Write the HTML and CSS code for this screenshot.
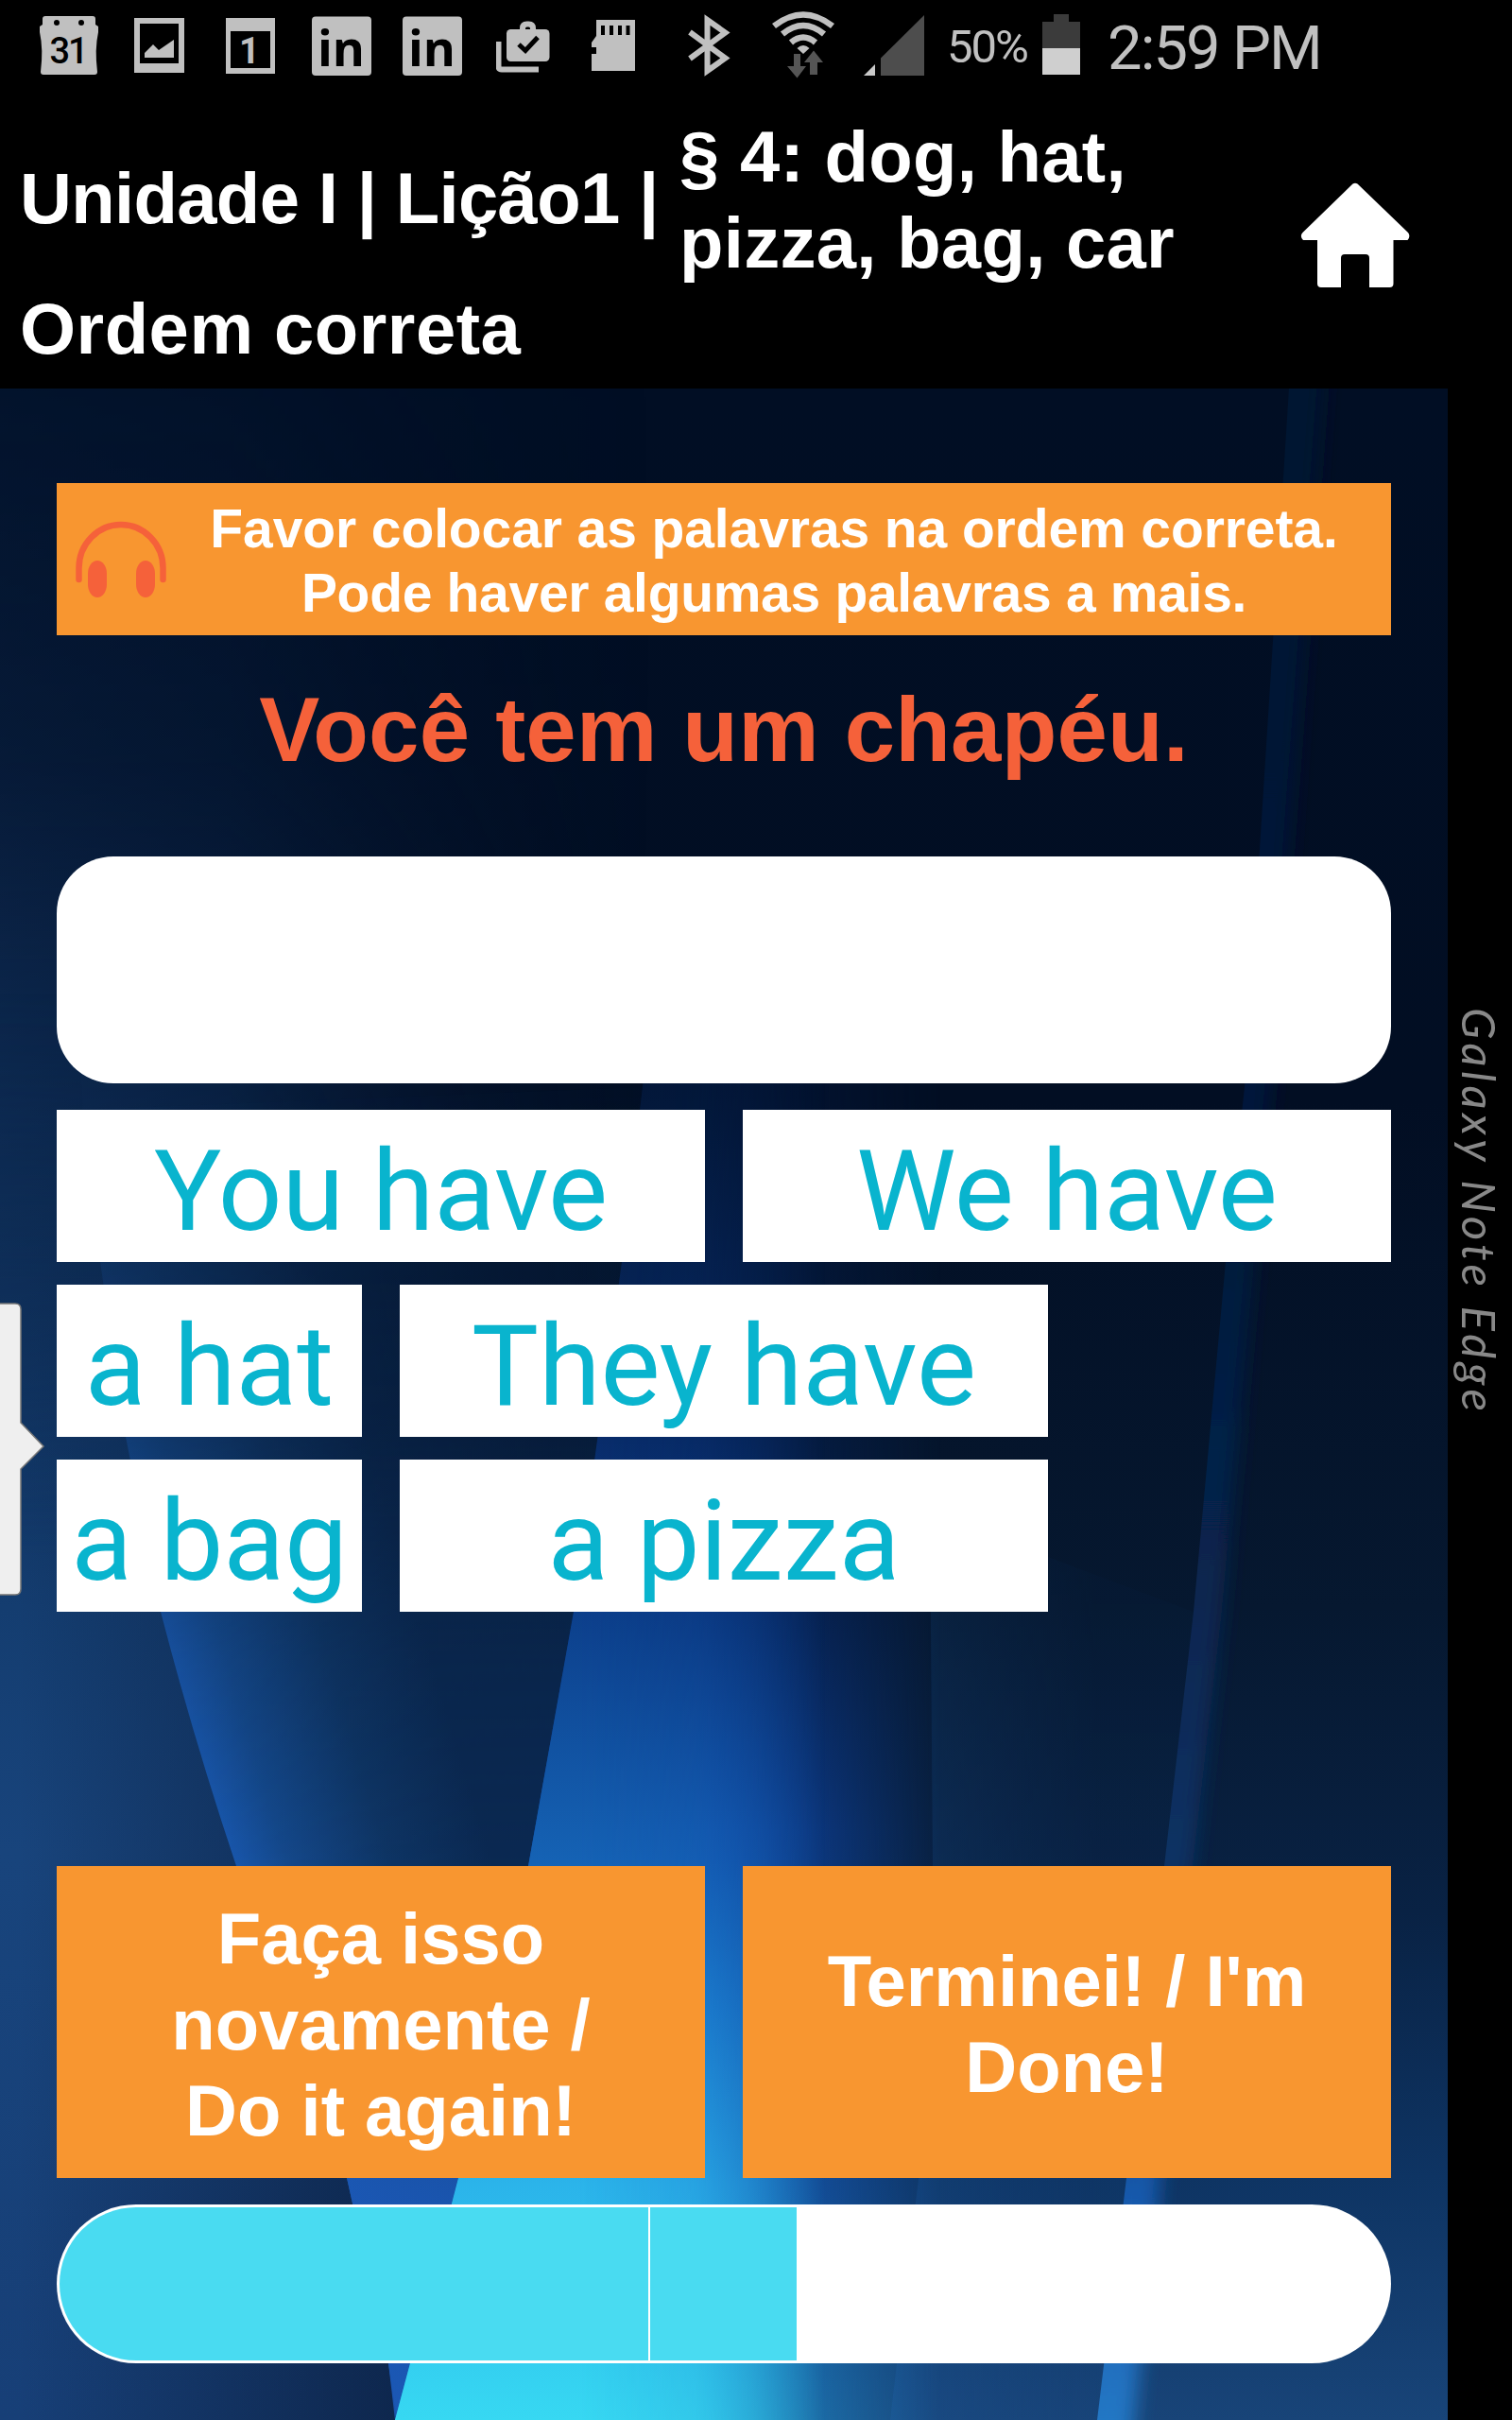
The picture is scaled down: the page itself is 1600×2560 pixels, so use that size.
FILE: index.html
```html
<!DOCTYPE html>
<html lang="pt">
<head>
<meta charset="utf-8">
<title>Ordem correta</title>
<link rel="stylesheet" href="styles.css">
</head>
<body>
<div class="device">
  <div class="screen">
    <header class="top">
      <div class="status">
        <svg viewBox="42 0 64 100" width="64" height="100"><path fill="#c0c0c0" d="M48 17h50q3 0 3 3v6l3 2v6q-4 18-1 42 0 3-3 3H46q-3 0-3-3 3-24-1-42v-6l3-2v-6q0-3 3-3z"/><circle cx="60" cy="24" r="3" /><circle cx="86" cy="24" r="3"/><text x="72" y="67" class="cal31">31</text></svg>
        <svg viewBox="142 0 54 100" width="54" height="100"><path fill="#c0c0c0" fill-rule="evenodd" d="M142 19h53v58h-53zM148 25v42h41V25z"/><path fill="#c0c0c0" d="M153 61v-5l9-9 6 6 16-11v19z"/></svg>
        <svg viewBox="239 0 53 100" width="53" height="100"><path fill="#c0c0c0" fill-rule="evenodd" d="M239 19h52v59h-52zM244 33v39h42V33z"/><text x="264" y="67" class="cal1">1</text></svg>
        <svg viewBox="330 0 64 100" width="64" height="100"><rect x="330" y="17.500" width="63" height="62.500" rx="4" fill="#c0c0c0"/><text x="361" y="70" class="lin">in</text></svg>
        <svg viewBox="330 0 64 100" width="64" height="100"><rect x="330" y="17.500" width="63" height="62.500" rx="4" fill="#c0c0c0"/><text x="361" y="70" class="lin">in</text></svg>
        <svg viewBox="525 0 58 100" width="58" height="100"><path fill="none" stroke="#c0c0c0" stroke-width="6" d="M527.500 44v26q0 3.500 3.500 3.500h39"/><path fill="none" stroke="#c0c0c0" stroke-width="6" d="M553 33v-3q0-4.500 4.500-4.500h2q4.500 0 4.500 4.500v3"/><rect x="536" y="31" width="45.500" height="34" rx="4.500" fill="#c0c0c0"/><path fill="none" stroke="#000" stroke-width="5" d="M549 47l7 6.500 13-14"/></svg>
        <svg viewBox="626 0 47 100" width="47" height="100"><path fill="#c0c0c0" d="M631 21h41v54h-46V57h5v-7h-5v-5l5-7z"/><path d="M636 27h4v10h-4zM645 27h4v10h-4zM654 27h4v10h-4zM662.500 27h4v10h-4z"/></svg>
        <svg viewBox="728 0 46 100" width="46" height="100"><path fill="none" stroke="#c0c0c0" stroke-width="6" d="M730 34l37.500 27.500-19 13.500V21l19 13.500L730 62"/></svg>
        <svg viewBox="816 0 70 100" width="70" height="100"><g fill="none" stroke="#c0c0c0" stroke-width="6.500"><path d="M819 27.500q31-24 62 0"/><path d="M828 36q22-18 44 0"/><path d="M837 45q13-11 26 0"/></g><path fill="#c0c0c0" d="M843.500 51q6.500-6 13 0l-6.500 6z"/><path fill="#555" d="M840 57h7v13h6l-9.500 12.500L833 70h7zM857 79v-13h-6l10-12.500L871 66h-6v13z"/></svg>
        <svg viewBox="914 0 65 100" width="65" height="100"><path fill="#4d4d4d" d="M932 80V61.500L978 16v64z"/><path fill="#c8c8c8" d="M914 80l12-12v12z"/></svg>
        <span class="pct">50%</span>
        <svg viewBox="1103 0 41 100" width="41" height="100"><path fill="#3b3b3b" d="M1115 15h16v8h12v28h-40V23h12z"/><path fill="#cfcfcf" d="M1103 51h40v28h-40z"/></svg>
        <span class="time">2:59 PM</span>
      </div>
      <div class="crumbs">
        <div class="unit">Unidade I | Lição1 |</div>
        <div class="part">§ 4: dog, hat,<br>pizza, bag, car</div>
        <svg class="home" viewBox="1376 193 116 112" width="116" height="112"><path fill="#fff" d="M1431.500 194.500q2.500-1.500 5 0L1490 246q3 4-.5 8H1474.500v46q0 4-4 4H1449v-31q0-4-4-4h-22q-4 0-4 4v31h-21q-4 0-4-4v-46H1379q-4-4-.5-8z"/></svg>
      </div>
      <div class="kind">Ordem correta</div>
    </header>
    <main class="lesson">
      <svg class="wallpaper" viewBox="0 411 1532 2149" preserveAspectRatio="none">
        <defs>
          <linearGradient id="base" gradientUnits="userSpaceOnUse" x1="0" y1="411" x2="0" y2="2560"><stop offset="0" stop-color="#010e24"/><stop offset=".35" stop-color="#020e23"/><stop offset=".6" stop-color="#061830"/><stop offset=".75" stop-color="#092244"/><stop offset=".88" stop-color="#0e3463"/><stop offset="1" stop-color="#184478"/></linearGradient>
          <linearGradient id="left" gradientUnits="userSpaceOnUse" x1="0" y1="411" x2="0" y2="2560"><stop offset="0" stop-color="#02142e"/><stop offset=".2" stop-color="#041732"/><stop offset=".36" stop-color="#0a2549"/><stop offset=".6" stop-color="#143d70"/><stop offset=".72" stop-color="#18447c"/><stop offset="1" stop-color="#173f77"/></linearGradient>
          <linearGradient id="leftShade" gradientUnits="userSpaceOnUse" x1="20" y1="0" x2="420" y2="0"><stop offset="0" stop-color="#0b1f40" stop-opacity="0"/><stop offset="1" stop-color="#0b1f40" stop-opacity=".75"/></linearGradient>
          <linearGradient id="topLeft" gradientUnits="userSpaceOnUse" x1="0" y1="0" x2="690" y2="0"><stop offset="0" stop-color="#14396a"/><stop offset=".35" stop-color="#0c2a52"/><stop offset="1" stop-color="#041229" stop-opacity="0"/></linearGradient>
          <linearGradient id="fadeTop" gradientUnits="userSpaceOnUse" x1="0" y1="411" x2="0" y2="1700"><stop offset="0" stop-color="#fff" stop-opacity=".12"/><stop offset=".3" stop-color="#fff" stop-opacity=".28"/><stop offset=".6" stop-color="#fff" stop-opacity=".68"/><stop offset="1" stop-color="#fff"/></linearGradient>
          <mask id="topMask" maskUnits="userSpaceOnUse" x="0" y="411" width="1532" height="2149"><rect y="411" width="1532" height="2149" fill="url(#fadeTop)"/></mask>
          <linearGradient id="fadeLeft" gradientUnits="userSpaceOnUse" x1="0" y1="1050" x2="0" y2="1650"><stop offset="0" stop-color="#fff" stop-opacity="0"/><stop offset="1" stop-color="#fff"/></linearGradient>
          <mask id="leftMask" maskUnits="userSpaceOnUse" x="0" y="411" width="1532" height="2149"><rect y="411" width="1532" height="2149" fill="url(#fadeLeft)"/></mask>
          <linearGradient id="sheet" gradientUnits="userSpaceOnUse" x1="250" y1="1974" x2="500" y2="1900"><stop offset="0" stop-color="#1a5bb4"/><stop offset=".2" stop-color="#154c92"/><stop offset=".6" stop-color="#0f3768"/><stop offset="1" stop-color="#0b2a54"/></linearGradient>
          <linearGradient id="fadeDown" gradientUnits="userSpaceOnUse" x1="0" y1="1100" x2="0" y2="2100"><stop offset="0" stop-color="#fff" stop-opacity="0"/><stop offset=".4" stop-color="#fff" stop-opacity=".35"/><stop offset=".65" stop-color="#fff" stop-opacity=".72"/><stop offset="1" stop-color="#fff"/></linearGradient>
          <mask id="down" maskUnits="userSpaceOnUse" x="0" y="411" width="1532" height="2149"><rect y="411" width="1532" height="2149" fill="url(#fadeDown)"/></mask>
          <linearGradient id="indigo" gradientUnits="userSpaceOnUse" x1="0" y1="1950" x2="0" y2="2330"><stop offset="0" stop-color="#1b57b4" stop-opacity="0"/><stop offset="1" stop-color="#1b57b4" stop-opacity=".9"/></linearGradient>
          <linearGradient id="glow" gradientUnits="userSpaceOnUse" x1="0" y1="1000" x2="0" y2="2560"><stop offset="0" stop-color="#02102c"/><stop offset=".12" stop-color="#031a3e"/><stop offset=".33" stop-color="#082c6a"/><stop offset=".45" stop-color="#0c3f8b"/><stop offset=".62" stop-color="#1562b4"/><stop offset=".72" stop-color="#1d86d2"/><stop offset=".84" stop-color="#2bb4ea"/><stop offset="1" stop-color="#37d8f2"/></linearGradient>
          <linearGradient id="halo" gradientUnits="userSpaceOnUse" x1="0" y1="1000" x2="0" y2="2560"><stop offset="0" stop-color="#02102c"/><stop offset=".33" stop-color="#05204e"/><stop offset=".45" stop-color="#07296a"/><stop offset=".6" stop-color="#0f48ac"/><stop offset=".84" stop-color="#1760c0"/><stop offset="1" stop-color="#1f8ccc"/></linearGradient>
          <linearGradient id="glowX" gradientUnits="userSpaceOnUse" x1="0" y1="0" x2="1532" y2="0"><stop offset=".4" stop-color="#fff"/><stop offset=".48" stop-color="#fff" stop-opacity=".8"/><stop offset=".52" stop-color="#fff" stop-opacity=".5"/><stop offset=".57" stop-color="#fff" stop-opacity="0"/></linearGradient>
          <linearGradient id="haloX" gradientUnits="userSpaceOnUse" x1="0" y1="0" x2="1532" y2="0"><stop offset=".49" stop-color="#fff"/><stop offset=".55" stop-color="#fff" stop-opacity=".65"/><stop offset=".65" stop-color="#fff" stop-opacity="0"/></linearGradient>
          <mask id="glowMask" maskUnits="userSpaceOnUse" x="0" y="411" width="1532" height="2149"><rect y="411" width="1532" height="2149" fill="url(#glowX)"/></mask>
          <mask id="haloMask" maskUnits="userSpaceOnUse" x="0" y="411" width="1532" height="2149"><rect y="411" width="1532" height="2149" fill="url(#haloX)"/></mask>
          <linearGradient id="fold" gradientUnits="userSpaceOnUse" x1="945" y1="0" x2="1160" y2="0"><stop offset="0" stop-color="#2166b0" stop-opacity=".4"/><stop offset="1" stop-color="#174585" stop-opacity=".1"/></linearGradient>
          <linearGradient id="ray" gradientUnits="userSpaceOnUse" x1="0" y1="411" x2="0" y2="2560"><stop offset="0" stop-color="#021232"/><stop offset=".42" stop-color="#04193c"/><stop offset=".62" stop-color="#082853"/><stop offset=".75" stop-color="#0b3468"/><stop offset=".9" stop-color="#1a5cb0"/><stop offset="1" stop-color="#2377c4"/></linearGradient>
          <filter id="soft" x="-1" width="3"><feGaussianBlur stdDeviation="10 0"/></filter>
          <clipPath id="rightOf"><path d="M1364 411L1317 1150 1297 1335 1263 1705 1232 1974 1192 2304 1161 2560H1532V411z"/></clipPath>
        </defs>
        <rect y="411" width="1532" height="2149" fill="url(#base)"/>
        <path d="M0 411H690L680 1150 658 1335 607 1705 559 1974 485 2304 418 2560H0z" fill="url(#topLeft)" mask="url(#topMask)"/>
        <g mask="url(#leftMask)">
          <path d="M0 1000H75L88 1174 106 1335 133 1520 170 1705 Q205 1840 250 1974L367 2304 411 2500 420 2560H0z" fill="url(#left)"/>
          <path d="M0 1000H75L88 1174 106 1335 133 1520 170 1705 Q205 1840 250 1974L367 2304 411 2500 420 2560H0z" fill="url(#leftShade)"/>
        </g>
        <path d="M88 1174L106 1335 133 1520 170 1705 Q205 1840 250 1974L367 2304 411 2500 420 2560 434 2500 485 2304 559 1974 607 1705 658 1335 680 1150z" fill="url(#sheet)" mask="url(#down)"/>
        <path d="M367 2304L250 1974H559L485 2304 434 2500 418 2560 411 2500z" fill="url(#indigo)"/>
        <path d="M700 1000L680 1150 658 1335 607 1705 559 1974 485 2304 434 2500 418 2560H1532V1000z" fill="url(#halo)" mask="url(#haloMask)"/>
        <path d="M700 1000L680 1150 658 1335 607 1705 559 1974 485 2304 434 2500 418 2560H1532V1000z" fill="url(#glow)" mask="url(#glowMask)"/>
        <path d="M984 1600L987 1974 972 2304 942 2560H1161L1192 2304 1232 1974 1263 1705z" fill="url(#fold)" mask="url(#down)" opacity=".6"/>
        <g clip-path="url(#rightOf)"><path filter="url(#soft)" d="M1340 411L1296 1150 1276 1335 1243 1705 1212 1974 1172 2304 1141 2560H1200L1228 2304 1262 1974 1293 1705 1327 1335 1345 1150 1400 411z" fill="url(#ray)"/></g>
      </svg>
      <section class="hint">
        <svg class="phones" viewBox="79 549 98 84" width="98" height="84"><path fill="none" stroke="#f5613a" stroke-width="6.500" stroke-linecap="round" d="M83.500 612v-12a44.500 46 0 0 1 89 0v12"/><rect x="93" y="592" width="20" height="39" rx="10" ry="14" fill="#f5613a"/><rect x="144" y="592" width="20" height="39" rx="10" ry="14" fill="#f5613a"/></svg>
        <p class="hint-text">Favor colocar as palavras na ordem correta.<br><span class="tight">Pode haver algumas palavras a mais.</span></p>
      </section>
      <h1 class="phrase">Você tem um chapéu.</h1>
      <div class="answer"></div>
      <div class="chips">
        <div class="row"><span class="chip wide">You have</span><span class="chip wide">We have</span></div>
        <div class="row"><span class="chip">a hat</span><span class="chip wide">They have</span></div>
        <div class="row"><span class="chip">a bag</span><span class="chip wide">a pizza</span></div>
      </div>
      <div class="actions">
        <div class="action">Faça isso<br>novamente /<br>Do it again!</div>
        <div class="action">Terminei! / I'm<br>Done!</div>
      </div>
      <div class="progress"><div class="done"></div><div class="current"></div></div>
      <svg class="handle" viewBox="0 0 48 312" width="48" height="312"><path fill="#efefef" stroke="#777" stroke-width="1.500" d="M-4 1H16q6 0 6 6V127L46 152 22 176V303q0 6-6 6H-4z"/></svg>
    </main>
  </div>
  <aside class="edge"><span class="edge-text">Galaxy Note Edge</span></aside>
</div>
</body>
</html>
```
FILE: styles.css
```css
* { box-sizing: border-box; }
body { margin: 0; background: #000; font-family: "Liberation Sans", Arial, sans-serif; }
svg { display: block; }
.device { display: flex; width: 1600px; height: 2560px; background: #000; overflow: hidden; }
.screen { width: 1532px; display: flex; flex-direction: column; }
.top { height: 411px; color: #fff; font-weight: 700; font-size: 76px; line-height: 91px; white-space: nowrap; }
.status {
  display: grid; height: 100px; padding-left: 42px;
  grid-template-columns: 100px 97px 91px 96px 99px 101px 102px 88px 98px 90px 99px 69px 300px;
  font-family: Roboto, sans-serif; font-weight: 400; color: #c0c0c0; line-height: 100px;
}
.cal31 { font: 500 38px Roboto, sans-serif; text-anchor: middle; letter-spacing: -2px; }
.cal1 { font: 700 38px Roboto, sans-serif; text-anchor: middle; fill: #c0c0c0; }
.lin { font: 700 52px "Open Sans", sans-serif; text-anchor: middle; }
.pct { font-size: 49px; letter-spacing: -2px; margin-left: -2px; }
.time { font-size: 65px; letter-spacing: -1.9px; padding-top: 1px; }
.crumbs { display: flex; height: 201px; padding: 20px 40px 0 21px; }
.unit { width: 698px; padding-top: 44px; letter-spacing: -.65px; }
.part { width: 657px; letter-spacing: .3px; }
.home { margin-top: 73px; }
.kind { padding-left: 21px; letter-spacing: .5px; padding-top: 1px; }
.lesson { position: relative; height: 2149px; padding: 100px 60px 0; display: flex; flex-direction: column; }
.wallpaper { position: absolute; inset: 0; width: 100%; height: 100%; }
.hint, .phrase, .answer, .chips, .actions, .progress { position: relative; }
.hint { display: flex; align-items: center; height: 161px; background: #f89630; padding-left: 19px; }
.hint-text { margin: 0 0 0 44px; width: 1196px; text-align: center; color: #fff; font-weight: 700; font-size: 57px; line-height: 68px; padding-top: 3px; white-space: nowrap; letter-spacing: -.1px; }
.tight { letter-spacing: -.3px; }
.phrase { margin: 43px 0 0; height: 191px; text-align: center; color: #f5613a; font-size: 96px; line-height: 114px; letter-spacing: .2px; }
.answer { height: 240px; border-radius: 60px; background: #fff; }
.chips { display: flex; flex-direction: column; gap: 24px; margin-top: 28px; }
.row { display: flex; gap: 40px; }
.chip { width: 323px; height: 161px; background: #fff; color: #09b4ce; font-family: Roboto, sans-serif; font-size: 119px; line-height: 174px; text-align: center; white-space: nowrap; }
.wide { width: 686px; }
.actions { display: flex; gap: 40px; margin-top: 269px; }
.action { width: 686px; height: 330px; display: flex; align-items: center; justify-content: center; text-align: center; background: #f89630; color: #fff; font-weight: 700; font-size: 76px; line-height: 91px; padding-top: 4px; }
.progress { display: flex; gap: 2px; margin-top: 28px; height: 168px; padding: 3px; background: #fff; border-radius: 84px; overflow: hidden; }
.done { width: 623px; background: #49dbf1; border-radius: 81px 0 0 81px; }
.current { width: 155px; background: #49dbf1; }
.handle { position: absolute; left: 0; top: 967px; }
.edge { width: 68px; background: #000; display: flex; justify-content: center; padding-top: 1066px; }
.edge-text { writing-mode: vertical-rl; height: 440px; color: #888; font-family: Lato, sans-serif; font-style: italic; font-size: 49px; line-height: 64px; letter-spacing: 4.500px; white-space: nowrap; }
```
